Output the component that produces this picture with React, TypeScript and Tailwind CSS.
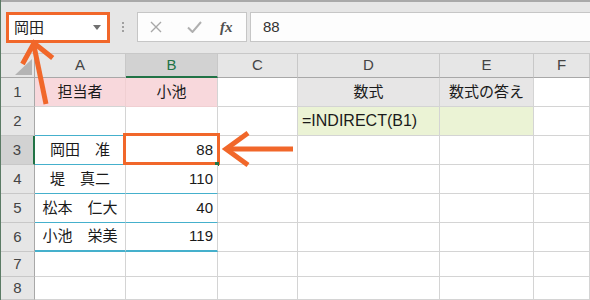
import type { ReactNode } from "react"

const font = "font-['Liberation_Sans','Noto_Sans_CJK_JP',sans-serif]"

const colLetters = ["A", "B", "C", "D", "E", "F"]
const rowHeights = ["h-[29px]", "h-[29px]", "h-[29px]", "h-[29px]", "h-[29px]", "h-[29px]", "h-[25px]", "h-[23px]"]

const names = ["岡田　准", "堤　真二", "松本　仁大", "小池　栄美"]
const scores = ["88", "110", "40", "119"]

function Cell({ className = "", children }: { className?: string; children?: ReactNode }) {
  return (
    <div className={`flex items-center border-r border-b border-[#d4d4d4] bg-white text-[15px] text-[#1a1a1a] ${className}`}>
      {children}
    </div>
  )
}

function NameBox() {
  return (
    <div className="flex h-[31px] w-[104px] items-center justify-between border-[3px] border-[#f1672a] bg-white pl-[5px] pr-[6px]">
      <span className="text-[15px] leading-none text-[#222]">岡田</span>
      <svg width="8" height="5" viewBox="0 0 8 5">
        <path d="M0 0h8L4 5z" fill="#707070" />
      </svg>
    </div>
  )
}

function FormulaBar() {
  return (
    <div className="flex flex-1 items-start">
      <div className="ml-[12px] mt-[10px] flex flex-col gap-[2px]">
        <span className="h-[2px] w-[2px] bg-[#a0a0a0]" />
        <span className="h-[2px] w-[2px] bg-[#a0a0a0]" />
        <span className="h-[2px] w-[2px] bg-[#a0a0a0]" />
      </div>
      <div className="ml-[13px] flex h-[30px] w-[110px] items-center border border-[#c6c6c6] bg-[#fdfdfd]">
        <svg className="ml-[12px]" width="12" height="12" viewBox="0 0 12 12">
          <path d="M1 1l10 10M11 1L1 11" stroke="#a8a8a8" strokeWidth="1.4" />
        </svg>
        <svg className="ml-[25px]" width="15" height="12" viewBox="0 0 15 12">
          <path d="M1 6.5l4.5 4.5L14 1" stroke="#b0b0b0" strokeWidth="2" fill="none" />
        </svg>
        <span className="ml-[18px] font-['Liberation_Serif',serif] text-[15px] font-bold italic text-[#505050]">fx</span>
      </div>
      <div className="ml-[3px] flex h-[30px] flex-1 items-center border border-r-0 border-[#c6c6c6] bg-[#fdfdfd] pl-[12px]">
        <span className="text-[15px] text-[#333]">88</span>
      </div>
    </div>
  )
}

function dataCells(r: number) {
  const teal = "border-b-[#45b0cc]"
  if (r === 1) {
    return [
      <Cell key="a" className="justify-center border-r-[#f0cfd2] !bg-[#f8d8dc]">担当者</Cell>,
      <Cell key="b" className="justify-center border-[#f0cfd2] !bg-[#f8d8dc] border-r-[#d4d4d4]">小池</Cell>,
      <Cell key="c" />,
      <Cell key="d" className="justify-center !bg-[#e7e6e6]">数式</Cell>,
      <Cell key="e" className="justify-center !bg-[#e7e6e6]">数式の答え</Cell>,
      <Cell key="f" />,
    ]
  }
  if (r === 2) {
    return [
      <Cell key="a" className={teal} />,
      <Cell key="b" className={teal} />,
      <Cell key="c" />,
      <Cell key="d" className="!bg-[#ebf3d5] pl-[4px] text-[16px]">=INDIRECT(B1)</Cell>,
      <Cell key="e" className="!bg-[#ebf3d5]" />,
      <Cell key="f" />,
    ]
  }
  if (r >= 3 && r <= 6) {
    const last = r === 6 ? "border-b-2" : ""
    return [
      <Cell key="a" className={`justify-center ${teal} ${last}`}>{names[r - 3]}</Cell>,
      <Cell key="b" className={`relative justify-end pr-[4px] ${teal} ${last}`}>
        {scores[r - 3]}
        {r === 3 ? (
          <>
            <div className="absolute -top-[3px] -left-[3px] -right-[3px] -bottom-[1px] border-[3px] border-[#f1672a]" />
            <div className="absolute -right-[2px] -bottom-[2px] h-[4px] w-[4px] bg-[#217346]" />
          </>
        ) : null}
      </Cell>,
      <Cell key="c" />,
      <Cell key="d" />,
      <Cell key="e" />,
      <Cell key="f" />,
    ]
  }
  return colLetters.map((c) => <Cell key={c} />)
}

export default function App() {
  return (
    <div className={`relative h-[300px] w-[590px] overflow-hidden border-l border-[#5b7b65] bg-[#e6e6e6] ${font}`}>
      <div className="flex h-[53px] items-start border-t-2 border-[#a9a9a9] pl-[5px] pt-[10px]">
        <NameBox />
        <FormulaBar />
      </div>

      <div className="grid grid-cols-[34px_91px_92px_80px_142px_94px_56px]">
        <div className="relative h-[25px] border-t border-r border-b border-[#c8c8c8] border-r-[#a8a8a8] border-b-[#a8a8a8]">
          <svg className="absolute right-[2px] bottom-[2px]" width="17" height="16" viewBox="0 0 17 16">
            <path d="M17 0v16H0z" fill="#b4b4b4" />
          </svg>
        </div>
        {colLetters.map((c) => (
          <div
            key={c}
            className={`flex h-[25px] items-center justify-center border-t border-r border-b border-[#c8c8c8] text-[15px] ${
              c === "B" ? "border-b-2 border-b-[#217346] bg-[#d2d2d2] text-[#217346]" : "border-b-[#a8a8a8] text-[#444]"
            }`}
          >
            {c}
          </div>
        ))}

        {rowHeights.map((h, i) => {
          const r = i + 1
          return [
            <div
              key={`h${r}`}
              className={`flex ${h} items-center justify-center border-r border-b border-[#c8c8c8] text-[15px] ${
                r === 3 ? "border-r-2 border-r-[#217346] bg-[#d2d2d2] text-[#444]" : "border-r-[#a8a8a8] text-[#444]"
              }`}
            >
              {r}
            </div>,
            ...dataCells(r).map((cell, j) => (
              <div key={`${r}-${j}`} className={`grid ${h}`}>
                {cell}
              </div>
            )),
          ]
        })}
      </div>

      <svg className="pointer-events-none absolute inset-0" width="590" height="300" viewBox="0 0 590 300">
        <g stroke="#f1672a" strokeWidth="5" fill="none" strokeLinejoin="miter">
          <path d="M33 46L45 104" />
          <polyline points="21.5,64 33,43 51.7,58" />
          <path d="M229 149H292" />
          <polyline points="247,133 225,149 247,165" />
        </g>
      </svg>
    </div>
  )
}
